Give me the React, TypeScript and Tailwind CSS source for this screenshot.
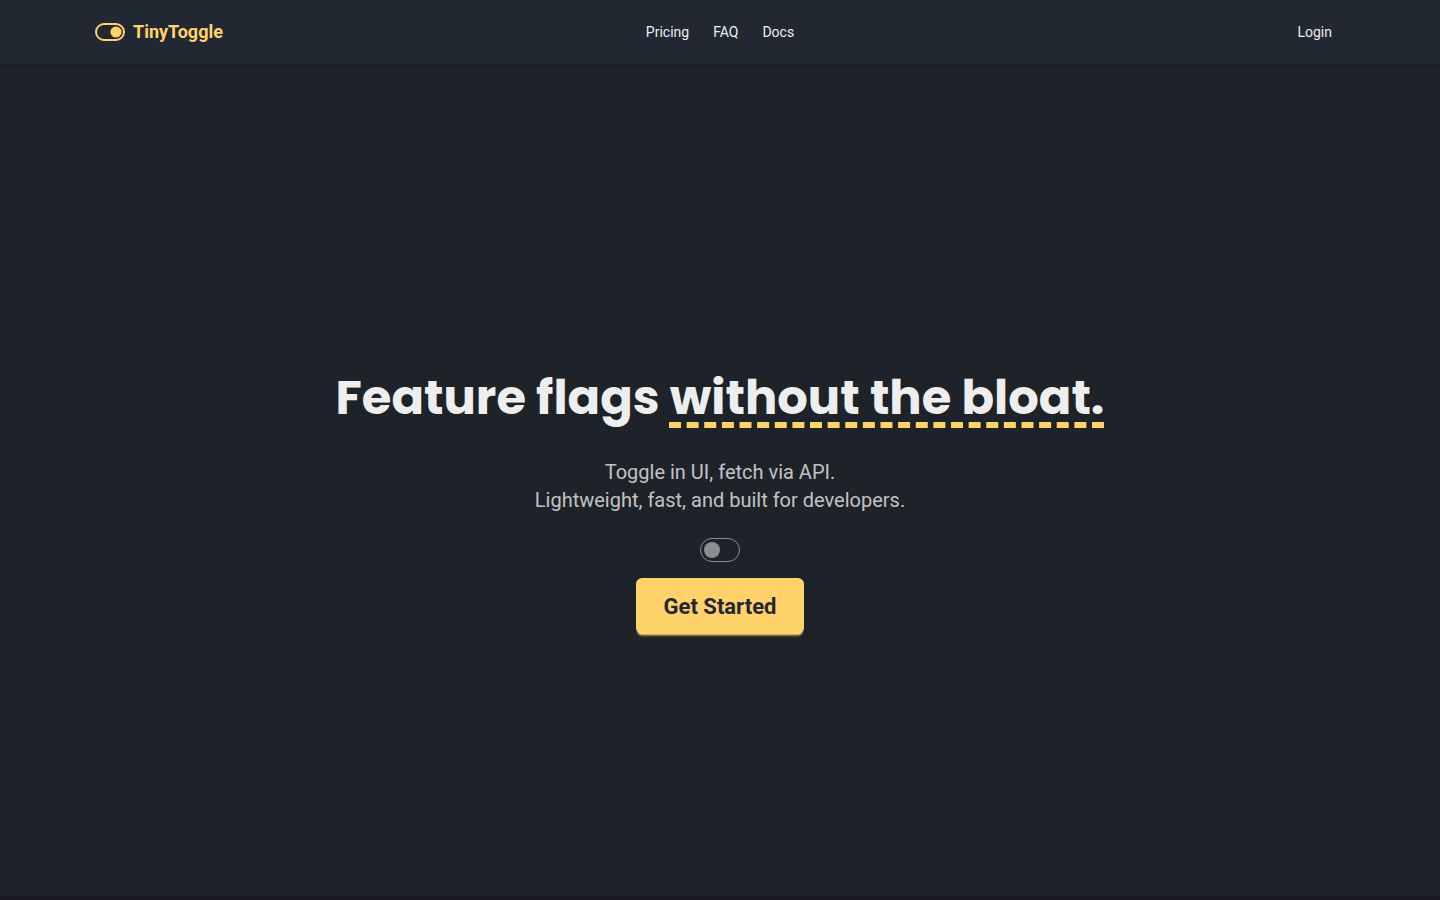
import React, { useState } from 'react';

const navLinks = [
  { label: 'Pricing', href: '#pricing' },
  { label: 'FAQ', href: '#faq' },
  { label: 'Docs', href: '#docs' },
];

const Logo: React.FC = () => (
  <svg width="30" height="18" viewBox="0 0 30 18" fill="none" aria-hidden="true">
    <rect x="1" y="1" width="28" height="16" rx="8" stroke="#ffd369" strokeWidth="2" />
    <circle cx="21" cy="9" r="5.6" fill="#ffd369" />
  </svg>
);

const Navbar: React.FC = () => (
  <header className="h-16 bg-[#222831] shadow-sm">
    <div className="mx-auto grid h-full max-w-7xl grid-cols-[1fr_auto_1fr] items-center">
      <a
        href="#top"
        className="ml-[15px] flex items-center gap-2 justify-self-start text-lg font-bold text-[#ffd369]"
      >
        <Logo />
        TinyToggle
      </a>
      <nav className="flex gap-6 text-sm text-[#eeeeee]">
        {navLinks.map((link) => (
          <a key={link.label} href={link.href}>
            {link.label}
          </a>
        ))}
      </nav>
      <a href="#login" className="mr-7 justify-self-end text-sm text-[#eeeeee]">
        Login
      </a>
    </div>
  </header>
);

const Hero: React.FC = () => {
  const [enabled, setEnabled] = useState(false);

  return (
    <main className="flex min-h-[calc(100vh-68px)] flex-col items-center justify-center pt-12 text-center">
      <h1 className="font-['Poppins','Inter',sans-serif] text-5xl leading-none font-bold text-[#eeeeee]">
        Feature flags{' '}
        <span className="underline decoration-[#ffd369] decoration-dashed decoration-[6px] underline-offset-8">
          without the bloat.
        </span>
      </h1>
      <p className="pt-9 text-xl text-[#eeeeee]/80">
        Toggle in UI, fetch via API.
        <br />
        Lightweight, fast, and built for developers.
      </p>
      <input
        type="checkbox"
        role="switch"
        aria-label="Try the toggle"
        checked={enabled}
        onChange={(e) => setEnabled(e.target.checked)}
        className="mt-6 flex h-6 w-10 cursor-pointer appearance-none items-center rounded-full border border-[#8b8d92] px-[3px] before:size-4 before:rounded-full before:bg-[#8b8d92] checked:justify-end checked:border-[#ffd369] checked:before:bg-[#ffd369]"
      />
      <button
        type="button"
        className="mt-4 h-14 cursor-pointer rounded-md bg-[#ffd369] px-7 text-[22px] font-bold text-[#222831] shadow-[0_3px_2px_-2px_#ffd369,0_4px_3px_-2px_#ffd3694d]"
      >
        Get Started
      </button>
    </main>
  );
};

const App: React.FC = () => {
  return (
    <div id="top" className="min-h-screen bg-[#1e2229] font-['Roboto',sans-serif]">
      <Navbar />
      <Hero />
      <div className="h-1 bg-[#1b1826]" />
    </div>
  );
};

export default App;
